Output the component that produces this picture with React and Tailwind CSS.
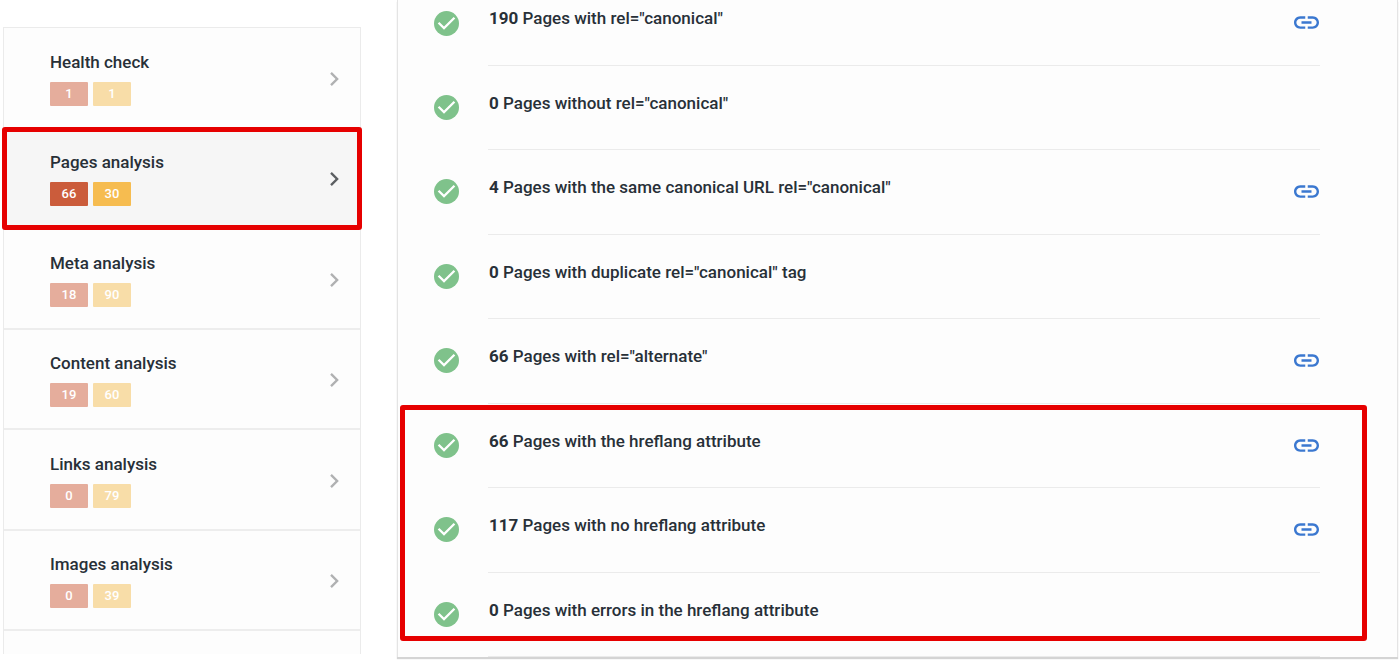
import React, { useState } from 'react';

const SECTIONS = [
  { name: 'Health check', errors: 1, warnings: 1 },
  { name: 'Pages analysis', errors: 66, warnings: 30 },
  { name: 'Meta analysis', errors: 18, warnings: 90 },
  { name: 'Content analysis', errors: 19, warnings: 60 },
  { name: 'Links analysis', errors: 0, warnings: 79 },
  { name: 'Images analysis', errors: 0, warnings: 39 }
];

const CANONICAL_CHECKS = [
  { count: 0, label: 'Pages without rel="canonical"' },
  { count: 4, label: 'Pages with the same canonical URL rel="canonical"', link: true },
  { count: 0, label: 'Pages with duplicate rel="canonical" tag' },
  { count: 66, label: 'Pages with rel="alternate"', link: true }
];

const HREFLANG_CHECKS = [
  { count: 66, label: 'Pages with the hreflang attribute', link: true },
  { count: 117, label: 'Pages with no hreflang attribute', link: true },
  { count: 0, label: 'Pages with errors in the hreflang attribute' }
];

function CheckIcon() {
  return (
    <svg viewBox="2 2 20 20" className="h-[25px] w-[25px] shrink-0" aria-hidden="true">
      <circle cx="12" cy="12" r="10" fill="#7fc28b" />
      <path d="M10 17l-5-5 1.3-1.3L10 14.4l7.7-7.7L19 8z" fill="#fff" />
    </svg>
  );
}

function LinkIcon() {
  return (
    <svg viewBox="2 7 20 10" className="h-[13px] w-[25px]" fill="#3b78d0" aria-hidden="true">
      <path d="M3.9 12c0-1.71 1.39-3.1 3.1-3.1h4V7H7c-2.76 0-5 2.24-5 5s2.24 5 5 5h4v-1.9H7c-1.71 0-3.1-1.39-3.1-3.1zM8 13h8v-2H8v2zm9-6h-4v1.9h4c1.71 0 3.1 1.39 3.1 3.1s-1.39 3.1-3.1 3.1h-4V17h4c2.76 0 5-2.24 5-5s-2.24-5-5-5z" />
    </svg>
  );
}

function ChevronIcon({ active }) {
  return (
    <svg
      viewBox="8.59 6 7.41 12"
      className={`h-[14px] w-[9px] shrink-0 ${active ? 'text-[#5c5f62]' : 'text-[#b0b1b2]'}`}
      fill="currentColor"
      aria-hidden="true"
    >
      <path d="M10 6L8.59 7.41 13.17 12l-4.58 4.59L10 18l6-6z" />
    </svg>
  );
}

function SidebarItem({ section, active, last, onSelect }) {
  const badge = 'flex h-6 w-[38px] items-center justify-center rounded-[1px] text-[13px] leading-4 font-medium text-white';

  return (
    <li className={`relative min-h-[90px] flex-1 basis-0 ${active ? 'bg-[#f6f6f6]' : ''} ${last ? '' : 'border-b-2 border-[#ededed]'}`}>
      <button
        type="button"
        onClick={onSelect}
        className="flex h-full w-full cursor-pointer items-center justify-between pt-[3px] pr-[21px] pl-[46px] text-left"
      >
        <span className="flex flex-col gap-[10px]">
          <span className="text-[17px] leading-5 font-medium">{section.name}</span>
          <span className="flex gap-[5px]">
            <span className={`${badge} ${active ? 'bg-[#cb5c3b]' : 'bg-[#e5ad9c]'}`}>{section.errors}</span>
            <span className={`${badge} ${active ? 'bg-[#f6bc50]' : 'bg-[#f8dda8]'}`}>{section.warnings}</span>
          </span>
        </span>
        <ChevronIcon active={active} />
      </button>
      {active && (
        <span className="pointer-events-none absolute -inset-x-[2px] -top-[2px] -bottom-[3px] z-10 rounded-[3px] border-5 border-[#e60000]" />
      )}
    </li>
  );
}

function CheckRow({ item, first }) {
  return (
    <li className={`flex pr-[77px] pl-9 ${first ? 'h-[66px]' : 'min-h-[72px] flex-1 basis-0'}`}>
      <div className={`w-[54px] shrink-0 ${first ? 'pt-[11px]' : 'pt-[29px]'}`}>
        <CheckIcon />
      </div>
      <div className={`flex flex-1 items-start justify-between border-b border-[#ebebeb] ${first ? 'pt-[7px]' : 'pt-[26px]'}`}>
        <p className="pl-px text-[17px] leading-[22px] font-medium">
          <b className="font-bold">{item.count}</b> {item.label}
        </p>
        {item.link && (
          <a href="#pages" aria-label={item.label} className="mt-[9px] mr-px">
            <LinkIcon />
          </a>
        )}
      </div>
    </li>
  );
}

export default function App() {
  const [selected, setSelected] = useState('Pages analysis');

  return (
    <div className="flex min-h-screen gap-9 bg-white pr-[2px] pl-[3px] font-[Roboto,sans-serif] text-[#283038]">
      {/* Analysis sections */}
      <nav className="flex w-[358px] shrink-0 flex-col pt-[27px] pb-[7px]">
        <ul className="flex flex-1 flex-col border border-b-0 border-[#ebebeb] bg-[#fdfdfd]">
          {SECTIONS.map((section) => (
            <SidebarItem
              key={section.name}
              section={section}
              active={selected === section.name}
              onSelect={() => setSelected(section.name)}
            />
          ))}
          <li className="h-[23px]" />
        </ul>
      </nav>

      {/* Check results */}
      <main className="flex min-w-0 flex-1 flex-col pb-1">
        <div className="flex flex-1 flex-col border-x border-[#e4e4e4] bg-[#fdfdfd] shadow-[0_2px_1px_#d4d4d4]">
          <ul className="flex flex-4 basis-[66px] flex-col">
            <CheckRow first item={{ count: 190, label: 'Pages with rel="canonical"', link: true }} />
            {CANONICAL_CHECKS.map((item) => (
              <CheckRow key={item.label} item={item} />
            ))}
          </ul>
          <ul className="relative flex flex-3 basis-0 flex-col">
            {HREFLANG_CHECKS.map((item) => (
              <CheckRow key={item.label} item={item} />
            ))}
            <li className="pointer-events-none absolute top-px right-[30px] bottom-4 left-[2px] rounded-[3px] border-5 border-[#e60000]" />
          </ul>
        </div>
      </main>
    </div>
  );
}
